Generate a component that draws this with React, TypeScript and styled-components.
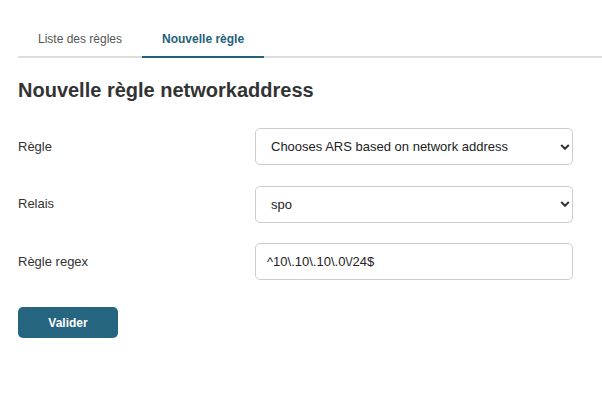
import React from "react";
import styled, { createGlobalStyle } from "styled-components";

const GlobalStyle = createGlobalStyle`
  html, body { margin: 0; padding: 0; background: #ffffff; }
  body { font-family: "Liberation Sans", Arial, sans-serif; color: #333333; }
  * { box-sizing: border-box; }
`;

const Page = styled.div`
  padding: 22px 0 0 18px;
`;

const TabBar = styled.div`
  display: flex;
  border-bottom: 2px solid #dddddd;
`;

const Tab = styled.div<{ $active?: boolean }>`
  padding: 10px 20px 10px;
  font-size: 12px;
  line-height: 14px;
  font-weight: ${(p) => (p.$active ? 700 : 400)};
  color: ${(p) => (p.$active ? "#25607a" : "#555555")};
  border-bottom: 2px solid ${(p) => (p.$active ? "#25607a" : "transparent")};
  margin-bottom: -2px;
  cursor: pointer;
`;

const Content = styled.div`
  padding-right: 29px;
`;

const Title = styled.h2`
  margin: 20px 0 26px;
  font-size: 20px;
  line-height: 24px;
  font-weight: 700;
  color: #333333;
`;

const Form = styled.form`
  display: grid;
  grid-template-columns: 237px 1fr;
  row-gap: 20.5px;
  align-items: center;
`;

const Label = styled.label`
  font-size: 13px;
  line-height: 16px;
  color: #333333;
`;

const SelectWrap = styled.div`
  position: relative;
`;

const Select = styled.select`
  appearance: none;
  -webkit-appearance: none;
  width: 100%;
  height: 37px;
  padding: 0 24px 0 15px;
  border: 1px solid #cccccc;
  border-radius: 5px;
  background: #ffffff;
  font-family: "Liberation Sans", Arial, sans-serif;
  font-size: 13px;
  color: #222222;
  outline: none;
`;

const Chevron = styled.svg`
  position: absolute;
  right: 3px;
  top: 50%;
  margin-top: -3px;
  width: 10px;
  height: 6px;
  pointer-events: none;
`;

const Input = styled.input`
  width: 100%;
  height: 37px;
  padding: 0 11px;
  border: 1px solid #cccccc;
  border-radius: 5px;
  background: #ffffff;
  font-family: "Liberation Sans", Arial, sans-serif;
  font-size: 13px;
  color: #222222;
  outline: none;
`;

const Actions = styled.div`
  margin-top: 27px;
`;

const Button = styled.button`
  width: 100px;
  height: 31px;
  border: none;
  border-radius: 5px;
  background: #266580;
  color: #ffffff;
  font-family: "Liberation Sans", Arial, sans-serif;
  font-size: 12px;
  font-weight: 700;
  cursor: pointer;
`;

const ChevronIcon = () => (
  <Chevron viewBox="0 0 10 6">
    <polyline points="1.2,1 5,4.8 8.8,1" fill="none" stroke="#333333" strokeWidth="2" />
  </Chevron>
);

export default function App() {
  return (
    <>
      <GlobalStyle />
      <Page>
        <TabBar>
          <Tab>Liste des règles</Tab>
          <Tab $active>Nouvelle règle</Tab>
        </TabBar>
        <Content>
          <Title>Nouvelle règle networkaddress</Title>
          <Form onSubmit={(e) => e.preventDefault()}>
            <Label>Règle</Label>
            <SelectWrap>
              <Select defaultValue="net">
                <option value="net">Chooses ARS based on network address</option>
              </Select>
              <ChevronIcon />
            </SelectWrap>
            <Label>Relais</Label>
            <SelectWrap>
              <Select defaultValue="spo">
                <option value="spo">spo</option>
              </Select>
              <ChevronIcon />
            </SelectWrap>
            <Label>Règle regex</Label>
            <Input defaultValue={"^10\\.10\\.10\\.0\\/24$"} />
          </Form>
          <Actions>
            <Button type="button">Valider</Button>
          </Actions>
        </Content>
      </Page>
    </>
  );
}
